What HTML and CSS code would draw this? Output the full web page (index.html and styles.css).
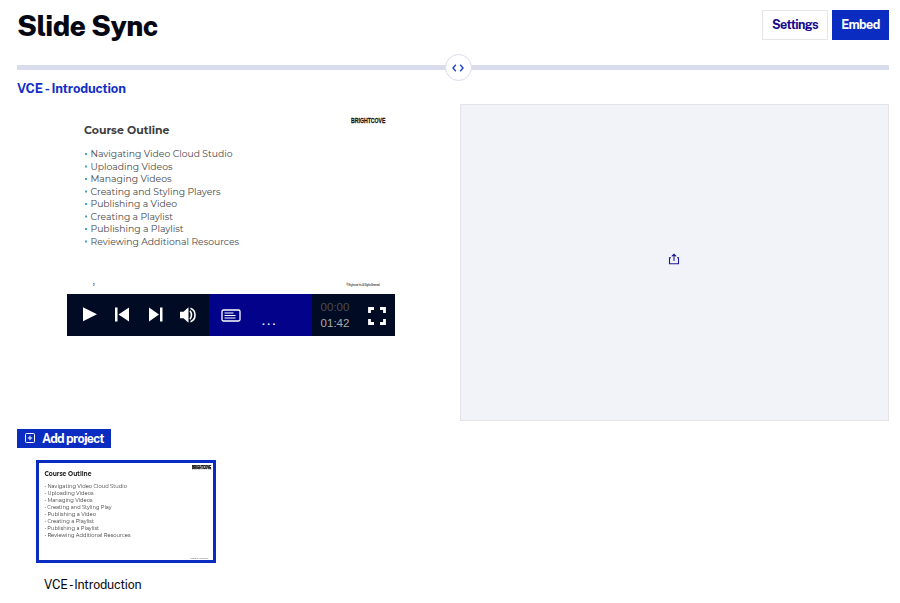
FILE: index.html
```html
<!DOCTYPE html>
<html lang="en">
<head>
<meta charset="utf-8">
<title>Slide Sync</title>
<link rel="stylesheet" href="styles.css">
</head>
<body>
<header class="header">
  <h1 class="title">Slide Sync</h1>
  <div class="actions">
    <button class="btn settings"><span>Settings</span></button>
    <button class="btn embed"><span>Embed</span></button>
  </div>
</header>
<div class="divider">
  <button class="toggle" aria-label="Resize"><svg width="14" height="10" viewBox="0 0 14 10"><path d="M4.800 1.800 2 5l2.800 3.200M9.200 1.800 12 5 9.200 8.200" fill="none" stroke="#2744c8" stroke-width="1.400"/></svg></button>
</div>
<h2 class="project-title">VCE - Introduction</h2>
<main class="workspace">
  <section class="player">
    <svg class="slide" width="328" height="186" viewBox="67 108 328 186">
      <text class="slide-heading" x="84" y="134.200" textLength="85.500" lengthAdjust="spacingAndGlyphs">Course Outline</text>
      <g class="bullets">
        <rect x="85" y="153" width="2" height="2"/><rect x="85" y="165.500" width="2" height="2"/><rect x="85" y="178" width="2" height="2"/><rect x="85" y="190.500" width="2" height="2"/><rect x="85" y="203" width="2" height="2"/><rect x="85" y="215.500" width="2" height="2"/><rect x="85" y="228" width="2" height="2"/><rect x="85" y="240.500" width="2" height="2"/>
      </g>
      <g class="slide-list">
        <text x="90.500" y="157" textLength="142" lengthAdjust="spacingAndGlyphs">Navigating Video Cloud Studio</text>
        <text x="90.500" y="169.600" textLength="82" lengthAdjust="spacingAndGlyphs">Uploading Videos</text>
        <text x="90.500" y="182.200" textLength="81" lengthAdjust="spacingAndGlyphs">Managing Videos</text>
        <text x="90.500" y="194.700" textLength="130" lengthAdjust="spacingAndGlyphs">Creating and Styling Players</text>
        <text x="90.500" y="207.300" textLength="86.500" lengthAdjust="spacingAndGlyphs">Publishing a Video</text>
        <text x="90.500" y="219.800" textLength="82.500" lengthAdjust="spacingAndGlyphs">Creating a Playlist</text>
        <text x="90.500" y="232.400" textLength="93" lengthAdjust="spacingAndGlyphs">Publishing a Playlist</text>
        <text x="90.500" y="245" textLength="148.500" lengthAdjust="spacingAndGlyphs">Reviewing Additional Resources</text>
      </g>
      <text class="brand" transform="translate(351 123) scale(.69 1)">BRiGHTCOVE</text>
      <text class="slide-foot" x="93" y="286">2</text>
      <text class="slide-foot" transform="translate(346.500 286) scale(.64 1)">© Brightcove Inc. All Rights Reserved.</text>
    </svg>
    <div class="controls">
      <svg class="transport" width="142" height="42" viewBox="67 294 142 42" fill="#fff">
        <path d="M83 307.300 97 314.300 83 321.300zM115 307.500h2.500v14H115zM129 307.500v14l-10.500-7zM160 307.500h2.500v14H160zM149 307.500v14l10-7zM180 311.800h3.500l5-4.600v15.600l-5-4.600H180z"/>
        <path d="M190 310.800q3 4.200 0 8.400M190.500 308.300c6 2.100 6 11.300 0 13.400" fill="none" stroke="#fff" stroke-width="1.600"/>
      </svg>
      <div class="progress">
        <svg width="20" height="13" viewBox="0 0 20 13"><rect x="1" y="1" width="18" height="11" rx="1.500" fill="none" stroke="#fff" stroke-width="1.300"/><path d="M3.500 4h9M3.500 6.500h11M3.500 9h11" stroke="#fff" stroke-width="1.100"/></svg>
        <span class="dots">...</span>
      </div>
      <div class="time"><span class="elapsed">00:00</span><span>01:42</span></div>
      <svg class="fullscreen" width="18" height="18" viewBox="0 0 18 18"><path d="M1.500 6V1.500H6M12 1.500h4.500V6M16.500 12v4.500H12M6 16.500H1.500V12" fill="none" stroke="#fff" stroke-width="2.800"/></svg>
    </div>
  </section>
  <section class="drop">
    <svg width="12" height="12" viewBox="0 0 12 12"><path d="M3 4.700H1.500v6h9v-6H9M6 8V1.500M3.800 3.300 6 1.200l2.200 2.100" fill="none" stroke="#1c1a9b" stroke-width="1.100"/></svg>
  </section>
</main>
<button class="add">
  <svg width="10" height="10" viewBox="0 0 10 10"><rect x=".5" y=".5" width="9" height="9" rx="1" fill="none" stroke="#fff" stroke-width="1"/><path d="M5 2.800v4.400M2.800 5h4.400" stroke="#fff"/></svg>
  <span>Add project</span>
</button>
<figure class="project">
  <div class="thumb">
    <svg width="174" height="97" viewBox="39 463 174 97">
      <g class="thumb-art">
        <text class="thumb-heading" x="44.500" y="475.500" textLength="47" lengthAdjust="spacingAndGlyphs">Course Outline</text>
        <g class="thumb-list">
          <text x="44.500" y="488.300" textLength="82.500" lengthAdjust="spacingAndGlyphs">• Navigating Video Cloud Studio</text>
          <text x="44.500" y="495.300" textLength="49" lengthAdjust="spacingAndGlyphs">• Uploading Videos</text>
          <text x="44.500" y="502.200" textLength="48" lengthAdjust="spacingAndGlyphs">• Managing Videos</text>
          <text x="44.500" y="509.200" textLength="67" lengthAdjust="spacingAndGlyphs">• Creating and Styling Play</text>
          <text x="44.500" y="516.100" textLength="51.500" lengthAdjust="spacingAndGlyphs">• Publishing a Video</text>
          <text x="44.500" y="523.100" textLength="49.500" lengthAdjust="spacingAndGlyphs">• Creating a Playlist</text>
          <text x="44.500" y="530" textLength="54.500" lengthAdjust="spacingAndGlyphs">• Publishing a Playlist</text>
          <text x="44.500" y="537" textLength="86" lengthAdjust="spacingAndGlyphs">• Reviewing Additional Resources</text>
        </g>
        <text class="thumb-brand" transform="translate(192 469.300) scale(.64 1)">BRiGHTCOVE</text>
        <text class="thumb-foot" transform="translate(190 559) scale(.55 1)">© Brightcove Inc. All Rights Reserved.</text>
      </g>
    </svg>
  </div>
  <figcaption class="caption">VCE - Introduction</figcaption>
</figure>
</body>
</html>
```
FILE: styles.css
```css
* { box-sizing: border-box; }
body { margin: 0; padding: 0 11px 0 17px; width: 900px; height: 603px; overflow: hidden; background: #fff; font-family: "Public Sans", "Libre Franklin", Inter, "Liberation Sans", sans-serif; color: #050812; }
h1, h2, figure { margin: 0; }
svg { display: block; flex: none; }
button { font: inherit; padding: 0; border: 0; }
.header { display: flex; justify-content: space-between; height: 65px; }
.title { font-size: 28.500px; line-height: 34px; font-weight: 800; letter-spacing: -0.6px; margin-top: 9px; white-space: nowrap; }
.actions { display: flex; gap: 4px; margin-top: 10px; height: 30px; }
.btn { font-size: 12.500px; font-weight: 700; white-space: nowrap; }
.btn span { position: relative; top: -1px; }
.settings { width: 66px; background: #fff; border: 1px solid #e6e6ea; color: #18078f; letter-spacing: -0.6px; }
.embed { width: 57px; background: #0a2cc0; color: #fff; letter-spacing: -0.6px; }
.divider { height: 5px; background: #d9dcec; display: flex; align-items: center; padding-left: 428px; }
.toggle { display: flex; align-items: center; justify-content: center; width: 27px; height: 27px; padding-right: 1px; flex: none; border-radius: 50%; background: #fff; border: 1px solid #d9dcec; }
.project-title { height: 34px; padding-top: 10px; font-size: 13px; line-height: 17px; font-weight: 700; color: #102fc5; letter-spacing: -0.18px; white-space: nowrap; }
.workspace { display: grid; grid-template-columns: 328px 429px; justify-content: space-between; height: 317px; padding-left: 50px; }
.player { padding-top: 4px; }
.slide { font-family: "Montserrat", Inter, sans-serif; }
.slide-heading { font-size: 11px; font-weight: 700; fill: #3e3e3e; }
.slide-list { font-size: 9.200px; fill: #484848; }
.bullets { fill: #3ea6c8; }
.brand { font: 700 7.500px "Liberation Sans", sans-serif; fill: #111; stroke: #111; stroke-width: .25px; }
.slide-foot { font-size: 2.800px; fill: #222; stroke: #222; stroke-width: .1px; }
.controls { display: flex; height: 42px; background: #020b24; color: #fff; }
.progress { width: 103px; background: #02028a; display: flex; align-items: center; padding: 1px 0 0 12px; gap: 20px; }
.dots { font-size: 13px; line-height: 14px; letter-spacing: 1.600px; padding: 11px 0 0 1px; }
.time { width: 46px; display: flex; flex-direction: column; padding-top: 5px; text-align: center; font: 11.500px/16px "Liberation Sans", sans-serif; color: #aaa; }
.elapsed { color: #4d4d50; }
.fullscreen { margin: 13px 0 0 10px; }
.drop { background: #f2f3f9; border: 1px solid #e3e3e8; display: flex; align-items: center; justify-content: center; padding: 0 1px 7px 0; }
.add { display: flex; align-items: center; gap: 7px; margin-top: 8px; width: 94px; height: 19px; padding: 0 0 1px 8px; background: #0a2cc0; color: #fff; font-size: 12.500px; font-weight: 700; letter-spacing: -0.7px; white-space: nowrap; }
.project { margin: 12px 0 0 19px; width: 180px; }
.thumb { height: 103px; border: 3px solid #0a2cc0; background: #fff; }
.thumb-art { filter: blur(.55px); font-family: Montserrat, Inter, sans-serif; }
.thumb-heading { font-size: 6.200px; font-weight: 700; fill: #222; }
.thumb-list { font-size: 5.200px; fill: #333; }
.thumb-brand { font: 700 4.500px "Liberation Sans", sans-serif; fill: #000; stroke: #000; stroke-width: .4px; }
.thumb-foot { font-size: 1.800px; fill: #222; }
.caption { margin: 14px 0 0 8px; font-size: 12.300px; line-height: 16px; letter-spacing: -0.2px; white-space: nowrap; }
```
